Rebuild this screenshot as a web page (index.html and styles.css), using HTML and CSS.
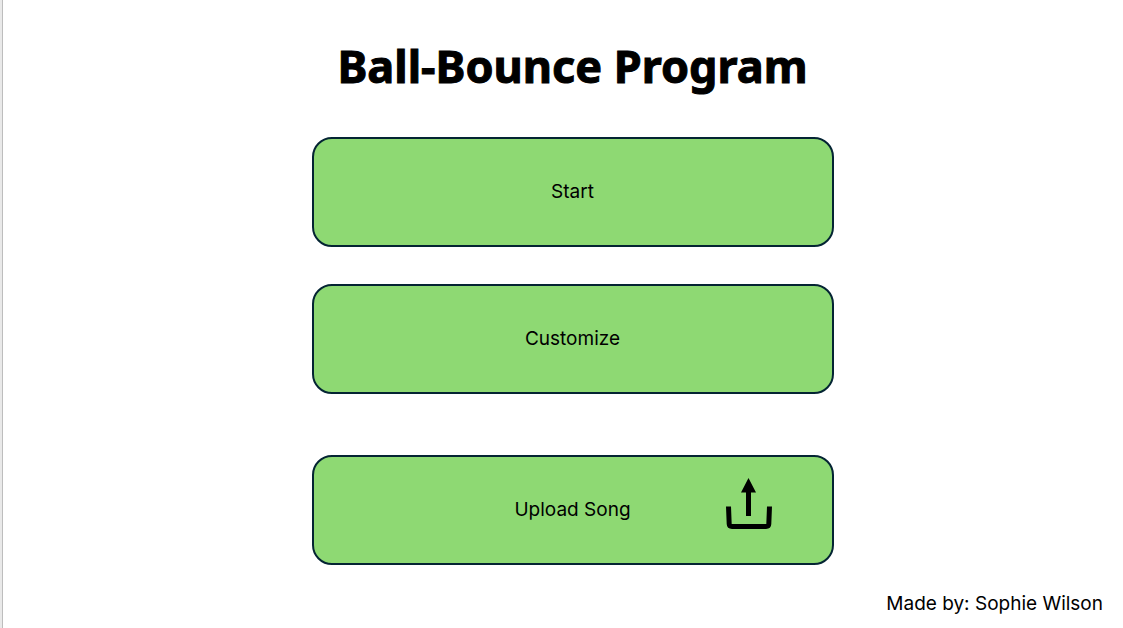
FILE: index.html
```html
<!DOCTYPE html>
<html lang="en">
<head>
<meta charset="utf-8">
<title>Ball-Bounce Program</title>
<link rel="stylesheet" href="styles.css">
</head>
<body>
<div class="page">
  <main class="menu">
    <h1 class="title">Ball-Bounce Program</h1>
    <button class="option" type="button">Start</button>
    <button class="option" type="button">Customize</button>
    <button class="option option-upload" type="button">
      <span class="label">Upload Song</span>
      <svg class="upload-icon" viewBox="0 0 48 64" aria-hidden="true">
        <path class="tray" d="M3.500 28.500L4.200 46Q4.300 48.500 7 48.500H41Q43.700 48.500 43.800 46L44.500 28.500"/>
        <path d="M23.500 0L31 14.500H26V38H21V14.500H16Z"/>
      </svg>
    </button>
  </main>
  <footer class="credit">Made by: Sophie Wilson</footer>
</div>
</body>
</html>
```
FILE: styles.css
```css
* {
  box-sizing: border-box;
}

body {
  margin: 0;
  background: #fff;
  color: #000;
  font-family: Inter, "Noto Sans", sans-serif;
  font-size: 19px;
  line-height: 28px;
}

.page {
  display: flex;
  flex-direction: column;
  min-height: 100vh;
  padding: 34px 20px 10px 40px;
  border-left: 2px solid #e9e9e9;
  box-shadow: inset 1px 0 #bdbdbd;
}

.menu {
  display: flex;
  flex-direction: column;
  gap: 37px;
  width: 100%;
  max-width: 522px;
  margin: 0 auto;
}

.title {
  margin: 0;
  padding-bottom: 2px;
  font-family: "Noto Sans", sans-serif;
  font-size: 45px;
  font-weight: 700;
  line-height: 64px;
  text-align: center;
  white-space: nowrap;
  -webkit-text-stroke: 1px #000;
}

.option {
  display: grid;
  grid-template-columns: 1fr auto 1fr;
  align-items: center;
  height: 110px;
  padding: 0 59px;
  border: 2px solid #042433;
  border-radius: 20px;
  background: #8ed973;
  color: #000;
  font: inherit;
}

.option:not(.option-upload) {
  display: block;
}

.option-upload {
  margin-top: 24px;
}

.label {
  grid-column: 2;
}

.upload-icon {
  justify-self: end;
  width: 48px;
  height: 64px;
}

.tray {
  fill: none;
  stroke: #000;
  stroke-width: 5;
}

.credit {
  margin-top: auto;
  text-align: right;
}
```
